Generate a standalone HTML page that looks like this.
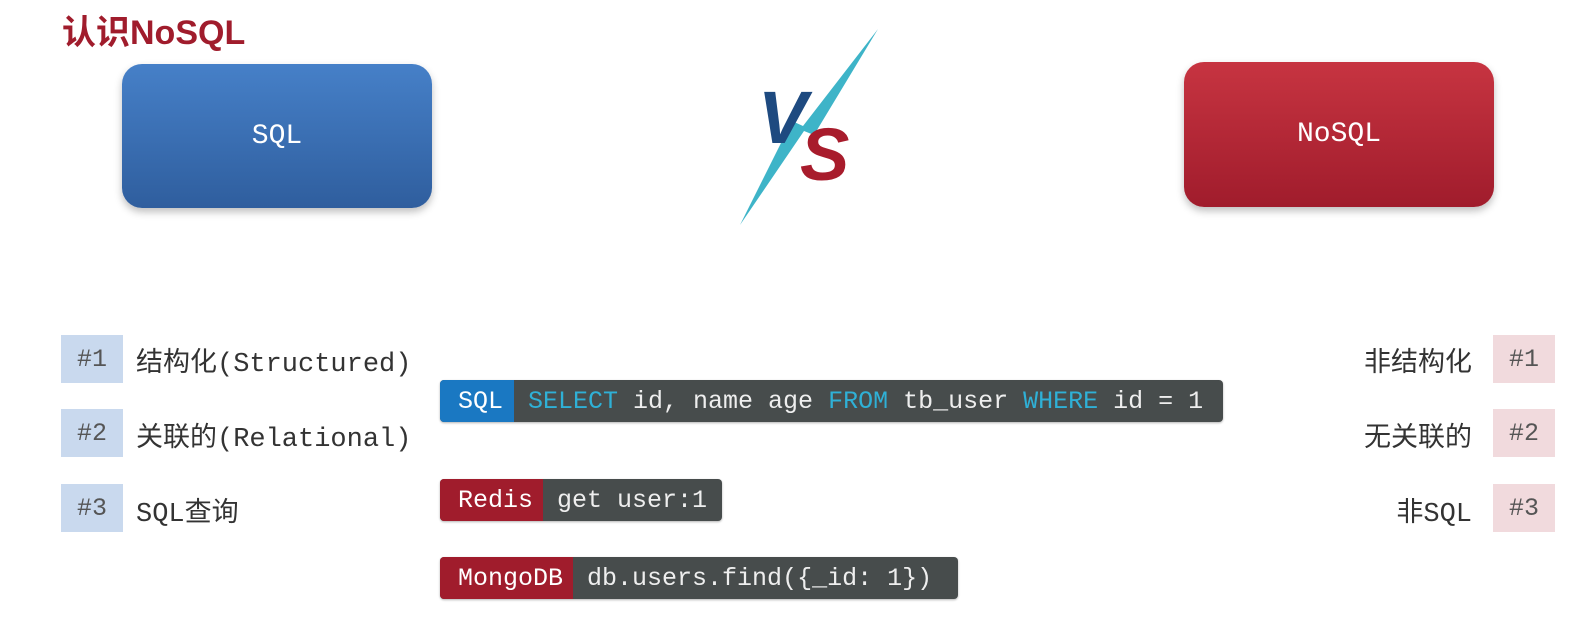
<!DOCTYPE html><html><head><meta charset="utf-8"><style>
body{margin:0;width:1575px;height:632px;background:#fff;position:relative;overflow:hidden;font-family:"Liberation Sans","Noto Sans CJK SC",sans-serif}
.a{position:absolute}
.box{position:absolute;border-radius:20px;color:#fff;font:28px "Liberation Mono",monospace;display:flex;align-items:center;justify-content:center;box-shadow:0 4px 8px rgba(0,0,0,.25)}
.tag{position:absolute;width:62px;height:48px;font:25px "Liberation Mono",monospace;color:#555;display:flex;align-items:center;justify-content:center}
.lt{position:absolute;font:27px "Liberation Mono","Noto Sans CJK SC",monospace;color:#333}
.bar{position:absolute;height:42px;display:flex;font:25px "Liberation Mono",monospace;color:#eee;background:#474c4c;border-radius:4px;overflow:hidden;align-items:stretch;box-shadow:0 1px 2px rgba(0,0,0,.3)}
.bar span.l{display:flex;align-items:center;padding:0 10px 0 18px;color:#fff}
.bar span.c{display:flex;align-items:center;padding-left:14px;white-space:pre}
.k{color:#2fb0d6}
</style></head><body>
<div class="a" style="left:62px;top:5px;font-size:34px;font-weight:bold;color:#a01c2c">认识NoSQL</div>
<div class="box" style="left:122px;top:64px;width:310px;height:144px;background:linear-gradient(#4680c8,#2f5e9e)">SQL</div>
<div class="box" style="left:1184px;top:62px;width:310px;height:145px;background:linear-gradient(#c73441,#a01c2c)">NoSQL</div>
<svg class="a" style="left:730px;top:25px" width="160" height="205" viewBox="0 0 160 205">
<polygon points="148,4 84,110 74,106 10,200 62,96 73,101" fill="#3eb4c8"/>
<text x="28" y="118" font-family="Liberation Sans" font-weight="bold" font-style="italic" font-size="74" fill="#1e4a80">V</text>
<text x="70" y="155" font-family="Liberation Sans" font-weight="bold" font-style="italic" font-size="74" fill="#a81c2c">S</text>
</svg>
<div class="tag" style="left:61px;top:335px;background:#c9d9ee">#1</div>
<div class="tag" style="left:61px;top:409px;background:#c9d9ee">#2</div>
<div class="tag" style="left:61px;top:484px;background:#c9d9ee">#3</div>
<div class="lt" style="left:136px;top:340px">结构化(Structured)</div>
<div class="lt" style="left:136px;top:415px">关联的(Relational)</div>
<div class="lt" style="left:136px;top:490px">SQL查询</div>
<div class="tag" style="left:1493px;top:335px;background:#f1dadd">#1</div>
<div class="tag" style="left:1493px;top:409px;background:#f1dadd">#2</div>
<div class="tag" style="left:1493px;top:484px;background:#f1dadd">#3</div>
<div class="lt" style="right:103px;top:340px">非结构化</div>
<div class="lt" style="right:103px;top:415px">无关联的</div>
<div class="lt" style="right:103px;top:490px">非SQL</div>
<div class="bar" style="left:440px;top:380px;width:783px"><span class="l" style="background:#1a78c2;width:46px">SQL</span><span class="c"><span class="k">SELECT</span> id, name age <span class="k">FROM</span> tb_user <span class="k">WHERE</span> id = 1</span></div>
<div class="bar" style="left:440px;top:479px;width:282px"><span class="l" style="background:#a01c2c">Redis</span><span class="c">get user:1</span></div>
<div class="bar" style="left:440px;top:557px;width:518px"><span class="l" style="background:#a01c2c">MongoDB</span><span class="c">db.users.find({_id: 1})</span></div>
</body></html>
